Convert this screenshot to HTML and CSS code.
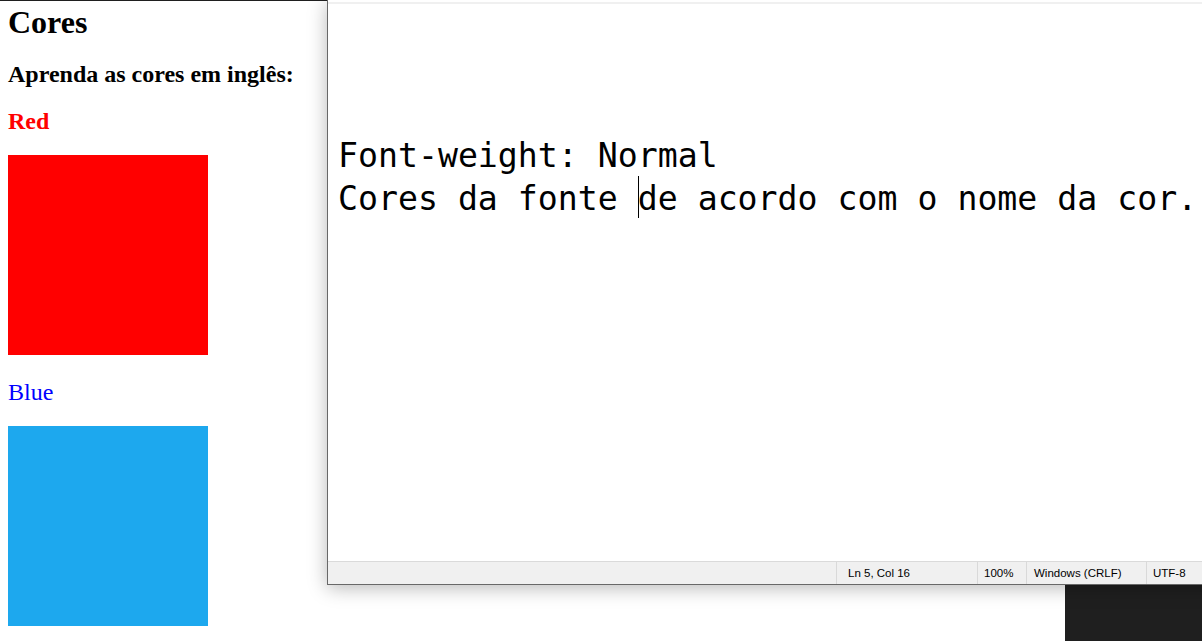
FILE: index.html
```html
<!DOCTYPE html>
<html lang="pt">
<head>
<meta charset="utf-8">
<title>Cores</title>
<link rel="stylesheet" href="styles.css">
</head>
<body>
<div class="page">
  <h1 class="title">Cores</h1>
  <h2 class="subtitle">Aprenda as cores em inglês:</h2>
  <p class="label label-red">Red</p>
  <div class="swatch swatch-red"></div>
  <p class="label label-blue">Blue</p>
  <div class="swatch swatch-blue"></div>
</div>

<div class="dark-corner"></div>

<div class="notepad">
  <div class="menu-strip"></div>
  <div class="menu-sep"></div>
  <div class="editor">
    <div class="line"></div>
    <div class="line"></div>
    <div class="line"></div>
    <div class="line">Font-weight: Normal</div>
    <div class="line">Cores da fonte <span class="caret"></span>de acordo com o nome da cor.</div>
  </div>
  <div class="statusbar">
    <div class="status-spacer"></div>
    <div class="status-cell cell-pos">Ln 5, Col 16</div>
    <div class="status-cell cell-zoom">100%</div>
    <div class="status-cell cell-eol">Windows (CRLF)</div>
    <div class="status-cell cell-enc">UTF-8</div>
  </div>
</div>
</body>
</html>
```

FILE: styles.css
```css
html, body {
  margin: 0;
  padding: 0;
}

body {
  width: 1202px;
  height: 641px;
  overflow: hidden;
  position: relative;
  background: #ffffff;
  font-family: "Liberation Serif", "Times New Roman", serif;
  color: #000;
}

.page {
  display: flex;
  flex-direction: column;
  align-items: flex-start;
  border-top: 1px solid #1f1f1f;
  padding: 3px 8px 0;
  height: 640px;
  box-sizing: border-box;
}

.title {
  margin: 0;
  font-size: 32px;
  line-height: 37px;
  font-weight: bold;
}

.subtitle {
  margin: 19px 0 0;
  font-size: 24px;
  line-height: 28px;
  font-weight: bold;
}

.label {
  margin: 0;
  font-size: 24px;
  line-height: 28px;
}

.label-red {
  margin-top: 19px;
  color: #ff0000;
  font-weight: bold;
}

.label-blue {
  margin-top: 23px;
  color: #0000ff;
  font-weight: normal;
}

.swatch {
  width: 200px;
  height: 200px;
  flex: none;
}

.swatch-red {
  margin-top: 20px;
  background: #ff0000;
}

.swatch-blue {
  margin-top: 20px;
  background: #1da8ee;
}

.dark-corner {
  position: absolute;
  left: 1065px;
  top: 584px;
  right: 0;
  bottom: 0;
  background: #1f1f1f;
}

.notepad {
  position: absolute;
  left: 327px;
  top: 0;
  width: 900px;
  display: flex;
  flex-direction: column;
  background: #ffffff;
  border-left: 1px solid #686868;
  border-bottom: 1px solid #686868;
  box-shadow: 0 3px 18px rgba(0, 0, 0, 0.28);
}

.menu-strip {
  height: 2px;
  background: #ffffff;
}

.menu-sep {
  height: 2px;
  background: #f0f0f0;
}

.editor {
  height: 557px;
  box-sizing: border-box;
  padding: 1px 0 0 10px;
  font-family: "DejaVu Sans Mono", "Liberation Mono", monospace;
  font-size: 33.2px;
  line-height: 43px;
  color: #000;
  overflow: hidden;
}

.line {
  height: 43px;
  white-space: pre;
}

.caret {
  display: inline-block;
  width: 0;
  height: 42px;
  border-left: 1px solid #000;
  margin-right: -1px;
  vertical-align: top;
  position: relative;
  top: -1px;
}

.statusbar {
  display: flex;
  height: 22px;
  border-top: 1px solid #dadada;
  background: #f0f0f0;
  font-family: "Liberation Sans", Arial, sans-serif;
  font-size: 11.5px;
  line-height: 22px;
  color: #000;
}

.status-spacer {
  width: 508px;
  flex: none;
}

.status-cell {
  border-left: 1px solid #d9d9d9;
  box-sizing: border-box;
  flex: none;
  white-space: nowrap;
}

.cell-pos {
  width: 141px;
  padding-left: 11px;
}

.cell-zoom {
  width: 49px;
  padding-left: 6px;
}

.cell-eol {
  width: 120px;
  padding-left: 7px;
}

.cell-enc {
  width: 80px;
  padding-left: 6px;
}
```
